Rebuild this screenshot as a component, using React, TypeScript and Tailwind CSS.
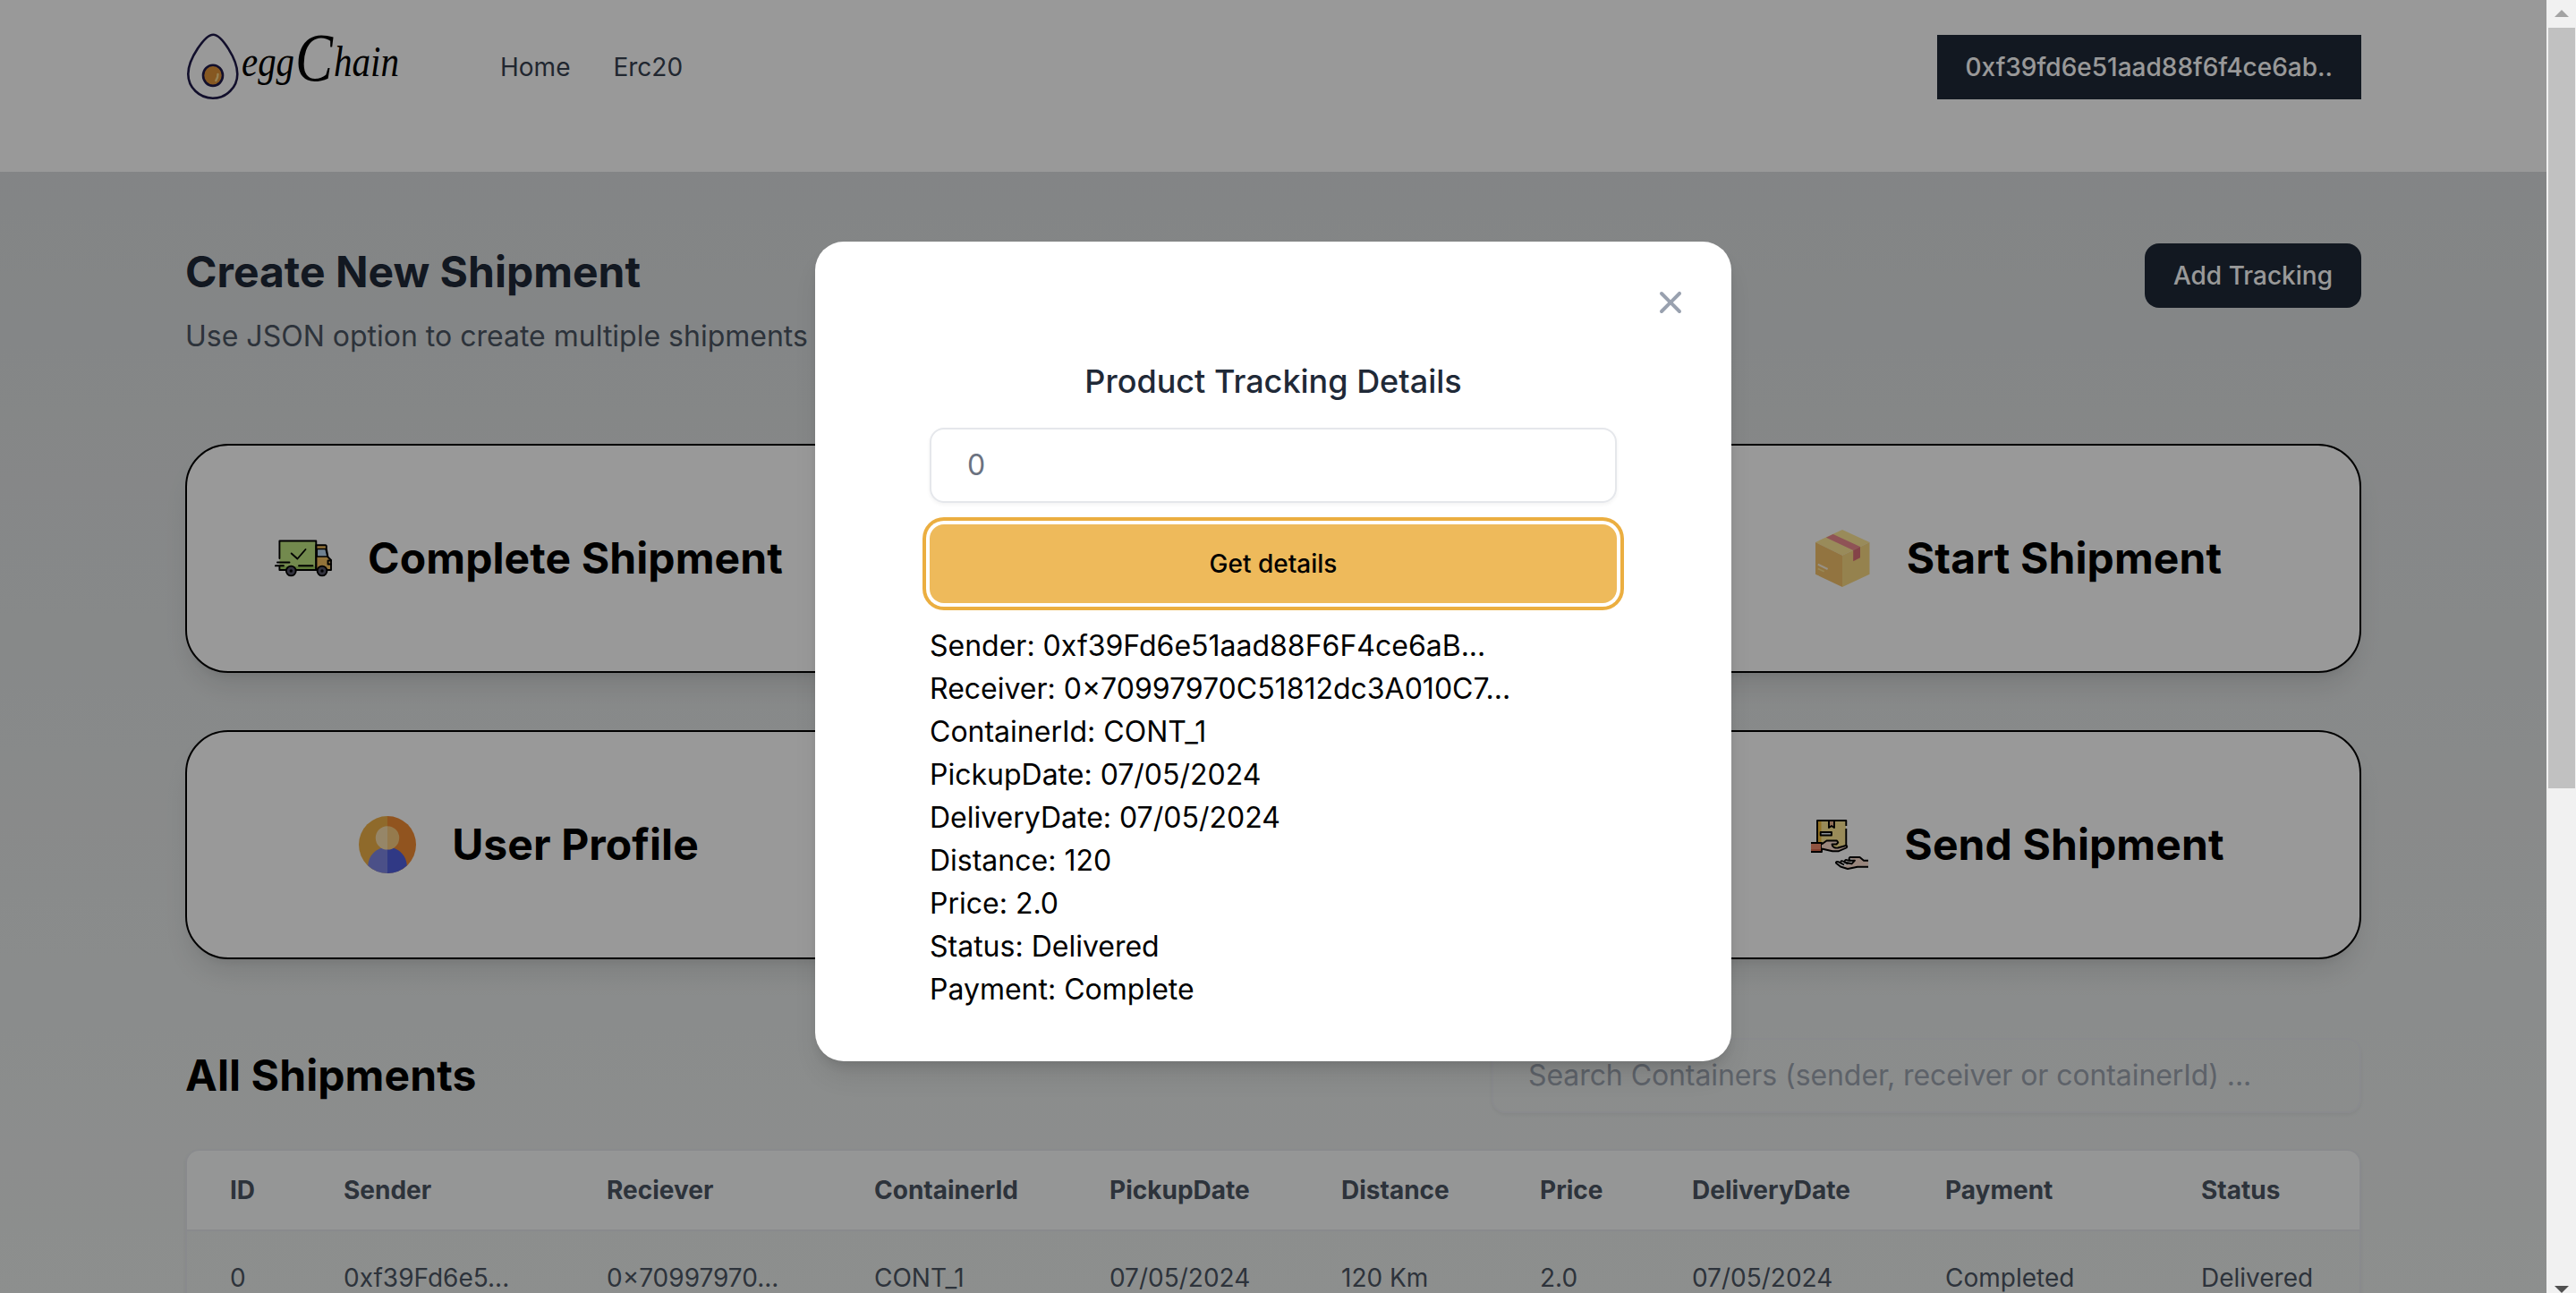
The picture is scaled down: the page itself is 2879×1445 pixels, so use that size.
import React from "react";

const details = [
  "Sender: 0xf39Fd6e51aad88F6F4ce6aB...",
  "Receiver: 0×70997970C51812dc3A010C7...",
  "ContainerId: CONT_1",
  "PickupDate: 07/05/2024",
  "DeliveryDate: 07/05/2024",
  "Distance: 120",
  "Price: 2.0",
  "Status: Delivered",
  "Payment: Complete",
];

const columns = [
  { title: "ID", value: "0", width: 127 },
  { title: "Sender", value: "0xf39Fd6e5...", width: 294 },
  { title: "Reciever", value: "0×70997970...", width: 299 },
  { title: "ContainerId", value: "CONT_1", width: 263 },
  { title: "PickupDate", value: "07/05/2024", width: 259 },
  { title: "Distance", value: "120 Km", width: 222 },
  { title: "Price", value: "2.0", width: 170 },
  { title: "DeliveryDate", value: "07/05/2024", width: 283 },
  { title: "Payment", value: "Completed", width: 286 },
  { title: "Status", value: "Delivered", width: 225 },
];

function Logo() {
  return (
    <svg className="h-[96px] w-[260px] overflow-visible" viewBox="0 -12 260 96">
      <path
        d="M31 5C40 5 58 32 58 49A27.5 27 0 0 1 3 49C3 32 22 5 31 5Z"
        transform="translate(0.3 -0.3)"
        fill="none"
        stroke="#1f1a4a"
        strokeWidth="2.6"
      />
      <ellipse cx="31" cy="50.300" rx="11" ry="11.600" fill="#e09338" stroke="#1f1a4a" strokeWidth="2.600" />
      <path d="M36.500 49C36.500 52 35.500 54.500 34.300 56" stroke="#fbd98c" strokeWidth="2.400" strokeLinecap="round" fill="none" />
      <g fontFamily="Liberation Serif, serif" fontStyle="italic" fill="#000">
        <text x="63" y="51" fontSize="48" textLength="59" lengthAdjust="spacingAndGlyphs">egg</text>
        <text x="123" y="56" fontSize="76" textLength="42" lengthAdjust="spacingAndGlyphs">C</text>
        <text x="166" y="51" fontSize="48" textLength="73" lengthAdjust="spacingAndGlyphs">hain</text>
      </g>
    </svg>
  );
}

function TruckIcon() {
  return (
    <svg className="size-16" viewBox="0 0 64 64" stroke="#000" strokeWidth="1.900" strokeLinecap="round" strokeLinejoin="round" fill="none">
      <path d="M5.400 12.500H46.300V45H5.400Z" fill="#c0e683" stroke="none" />
      <path d="M5.400 41H46.300V45H5.400Z" fill="#9fce62" stroke="none" />
      <path d="M46.300 17.200H56.500C57.500 17.200 58 18 57.800 19.500V21.500L59.500 30.500L63 34V45H46.300Z" fill="#f5c060" />
      <path d="M47.300 21.500H57L59 30H47.300Z" fill="#b9d8f2" strokeWidth="1.500" />
      <path d="M5.400 32V12.500H46.300V45H24.500M12 45H5.400V41.500" />
      <path d="M3 36.500H16.500M0.900 40.300H10M27 40.300H42.500M63 34.500H59.500V38.500H63" />
      <path d="M18.700 26.500L25.400 32.500L34.500 22" />
      <circle cx="18.300" cy="46" r="5.400" fill="#555568" />
      <circle cx="53" cy="46" r="5.400" fill="#555568" />
      <circle cx="18.300" cy="46" r="1.700" fill="#000" stroke="none" />
      <circle cx="53" cy="46" r="1.700" fill="#000" stroke="none" />
    </svg>
  );
}

function PackageIcon() {
  return (
    <svg className="size-16" viewBox="0 0 64 64">
      <path d="M32 0L62.500 14L32 28.700L2 14Z" fill="#ffe897" />
      <path d="M2 14L32 28.700V64L2 49.700Z" fill="#f3c26b" />
      <path d="M62.500 14L32 28.700V64L62.500 49.700Z" fill="#f9d983" />
      <path d="M13.900 8.700L21.700 5L52 19L44.200 23Z" fill="#ee8a90" />
      <path d="M44.200 23L52 19V31.300L44.200 35.300Z" fill="#dd7078" />
      <path d="M4.800 38.700L15.600 44" stroke="#fdf1dc" strokeWidth="2" />
      <path d="M4.800 43.500L11.700 46.800" stroke="#ffe18e" strokeWidth="1.800" />
    </svg>
  );
}

function UserIcon() {
  return (
    <svg className="size-16" viewBox="0 0 64 64">
      <path d="M32 0A32 32 0 0 0 32 64Z" fill="#efb148" />
      <path d="M32 0A32 32 0 0 1 32 64Z" fill="#f28c35" />
      <path d="M32 34.700C19 34.700 10.500 45 10.300 55.400A32 32 0 0 0 32 64Z" fill="#7d85e3" />
      <path d="M32 34.700C45 34.700 53.500 45 53.700 55.400A32 32 0 0 1 32 64Z" fill="#505fde" />
      <path d="M32 11.200A13.200 13.200 0 0 0 32 37.600Z" fill="#fbdfae" />
      <path d="M32 11.200A13.200 13.200 0 0 1 32 37.600Z" fill="#f9cb80" />
    </svg>
  );
}

function HandoverIcon() {
  return (
    <svg className="size-16" viewBox="0 0 64 64" stroke="#000" strokeWidth="1.900" strokeLinejoin="round" fill="none">
      <path d="M7 5H39V36H7Z" fill="#ffe894" stroke="none" />
      <path d="M7 5H11.500V30H7Z" fill="#f2bd3c" stroke="none" />
      <path d="M7 30V5H39.300V11M39.300 14V33" />
      <path d="M20 5V13L23 11L26 13V5Z" fill="#f0b890" />
      <path d="M10.700 18H23V21.500H10.700Z" fill="#e8f0fa" />
      <path d="M0 30H12V40H0Z" fill="#f08a6c" stroke="none" />
      <path d="M0 37H12V40H0Z" fill="#d9694b" stroke="none" />
      <path d="M0 30H12V40H0" />
      <path d="M12 31.500L17.500 27.500H29L30.300 29.500L28.500 31.500H23.500C23.500 34.500 27 36 30 35.500L39 33C40.500 33 40.800 34.500 39.500 35.500L31 39.200H24L12 36.500" fill="#ffe0d0" />
      <path d="M59.500 50.500L54.500 47H44L49.800 49.500L46 54L36 55.500L41 58L52 55.800H64V50.500Z" fill="#ffe0d0" stroke="none" />
      <path d="M64 49.700H59L54.500 46H43.500C42 47 42.500 49.200 44 49.700H49L45.500 53.300L37 51.500M64 56.700H52L41 59L33 56.500L28 52.500C27.500 51 29 50.500 30.500 51.200L37 54.500M33.500 52C33 50 34.500 49.800 36 50.500L41 53.500M38 51C37.500 49 39 48.500 41 49.500L44.500 50" />
    </svg>
  );
}

function ActionCard({ icon, label, className = "" }: { icon: React.ReactNode; label: string; className?: string }) {
  return (
    <div
      className={`flex h-64 items-center justify-center gap-10 rounded-[48px] border-2 border-black bg-white shadow-[0_20px_30px_-6px_rgba(0,0,0,0.1),0_8px_12px_-8px_rgba(0,0,0,0.1)] ${className}`}
    >
      {icon}
      <span className="text-[48px] leading-[64px] font-bold tracking-[0.1px] text-black">{label}</span>
    </div>
  );
}

function Header() {
  return (
    <header className="h-48 bg-white">
      <div className="mx-auto flex w-[2432px] items-start justify-between pt-[39px]">
        <div className="flex h-[72px] items-center">
          <div className="-mt-[34px] h-[72px]">
            <Logo />
          </div>
          <nav className="ml-[92px] flex gap-12 text-[28px] leading-10 text-[#374151]">
            <a>Home</a>
            <a>Erc20</a>
          </nav>
        </div>
        <button className="bg-[#1f2937] px-8 py-4 text-[28px] leading-10 font-medium text-white">
          0xf39fd6e51aad88f6f4ce6ab..
        </button>
      </div>
    </header>
  );
}

function ShipmentTable() {
  return (
    <div className="mt-10 overflow-hidden rounded-t-[16px] border-2 border-gray-200 shadow-[0_2px_4px_0_rgba(0,0,0,0.05)]">
      <table className="w-full table-fixed text-left text-[28px] leading-10">
        <colgroup>
          {columns.map((c) => (
            <col key={c.title} style={{ width: c.width }} />
          ))}
        </colgroup>
        <thead className="border-b-2 border-gray-200 bg-[#f9fafb] text-[#4b5563]">
          <tr>
            {columns.map((c) => (
              <th key={c.title} className="py-6 pl-12 font-bold">{c.title}</th>
            ))}
          </tr>
        </thead>
        <tbody className="text-[#4b5563]">
          <tr>
            {columns.map((c) => (
              <td key={c.title} className="py-8 pl-12 whitespace-nowrap">{c.value}</td>
            ))}
          </tr>
        </tbody>
      </table>
    </div>
  );
}

function TrackingModal() {
  return (
    <div className="absolute inset-0 flex items-start justify-center bg-black/40 pt-[270px]">
      <div className="h-[916px] w-[1024px] rounded-[32px] bg-white shadow-[0_20px_30px_-6px_rgba(0,0,0,0.1),0_8px_12px_-4px_rgba(0,0,0,0.1)]">
        <div className="flex h-32 justify-end pt-12 pr-12 text-gray-400">
          <svg className="size-10" viewBox="0 0 20 20" fill="currentColor">
            <path
              fillRule="evenodd"
              clipRule="evenodd"
              d="M4.293 4.293a1 1 0 011.414 0L10 8.586l4.293-4.293a1 1 0 111.414 1.414L11.414 10l4.293 4.293a1 1 0 01-1.414 1.414L10 11.414l-4.293 4.293a1 1 0 01-1.414-1.414L8.586 10 4.293 5.707a1 1 0 010-1.414z"
            />
          </svg>
        </div>
        <div className="mx-auto flex w-[768px] flex-col gap-6">
          <h4 className="text-center text-[36px] leading-[56px] font-medium text-[#1f2937]">Product Tracking Details</h4>
          <input
            className="h-[84px] w-full rounded-[16px] border-2 border-gray-200 bg-transparent px-10 pb-0.5 text-[32px] text-[#6b7280] shadow-[0_2px_4px_0_rgba(0,0,0,0.05)]"
            defaultValue="0"
          />
          <button className="h-[88px] w-full rounded-[16px] bg-[#eeba5b] text-[28px] leading-10 font-medium text-black shadow-[0_0_0_4px_#fff,0_0_0_8px_#ebae40]">
            Get details
          </button>
          <div className="text-[32px] leading-[48px] text-black">
            {details.map((line) => (
              <p key={line}>{line}</p>
            ))}
          </div>
        </div>
      </div>
    </div>
  );
}

function Scrollbar() {
  return (
    <div className="flex h-full w-[33px] flex-col items-center bg-[#f1f1f1]">
      <div className="flex h-[31px] w-full shrink-0 justify-center pt-[11px]">
        <svg className="h-2 w-4" viewBox="0 0 16 8" fill="#a3a3a3">
          <path d="M8 0L16 8H0Z" />
        </svg>
      </div>
      <div className="h-[850px] w-[30px] bg-[#c1c1c1]" />
      <div className="mt-auto">
        <svg className="h-2 w-4" viewBox="0 0 16 8" fill="#505050">
          <path d="M0 0H16L8 8Z" />
        </svg>
      </div>
    </div>
  );
}

export default function App() {
  return (
    <div className="flex h-[1445px] w-[2879px] overflow-hidden font-['Inter',sans-serif]">
      <div className="relative h-full w-[2846px] overflow-hidden bg-linear-to-b from-[#d8dbdd] to-[#ebeeed]">
        <Header />
        <main className="mx-auto w-[2432px] pt-20">
          <section className="flex items-start justify-between">
            <div>
              <h3 className="text-[48px] leading-[64px] font-bold text-[#1f2937]">Create New Shipment</h3>
              <p className="mt-4 text-[32px] leading-[48px] text-[#4b5563]">Use JSON option to create multiple shipments</p>
            </div>
            <button className="rounded-[16px] bg-[#1f2937] px-8 py-4 text-[28px] leading-10 font-medium text-white">
              Add Tracking
            </button>
          </section>
          <section className="mt-24 grid grid-cols-3 gap-16">
            <ActionCard icon={<TruckIcon />} label="Complete Shipment" />
            <ActionCard icon={<PackageIcon />} label="Start Shipment" className="col-start-3" />
            <ActionCard icon={<UserIcon />} label="User Profile" />
            <ActionCard icon={<HandoverIcon />} label="Send Shipment" className="col-start-3" />
          </section>
          <section className="mt-[88px] flex h-[84px] items-center justify-between">
            <h3 className="text-[48px] leading-[64px] font-bold tracking-[0.1px] text-black">All Shipments</h3>
            <input
              className="h-[84px] w-[972px] rounded-[16px] border-2 border-gray-200 bg-transparent pr-10 pb-0.5 pl-[39px] text-[32px] tracking-[-0.08px] shadow-[0_2px_4px_0_rgba(0,0,0,0.05)] placeholder:text-[#9ca3af]"
              placeholder="Search Containers (sender, receiver or containerId) ..."
            />
          </section>
          <ShipmentTable />
        </main>
        <TrackingModal />
      </div>
      <Scrollbar />
    </div>
  );
}
